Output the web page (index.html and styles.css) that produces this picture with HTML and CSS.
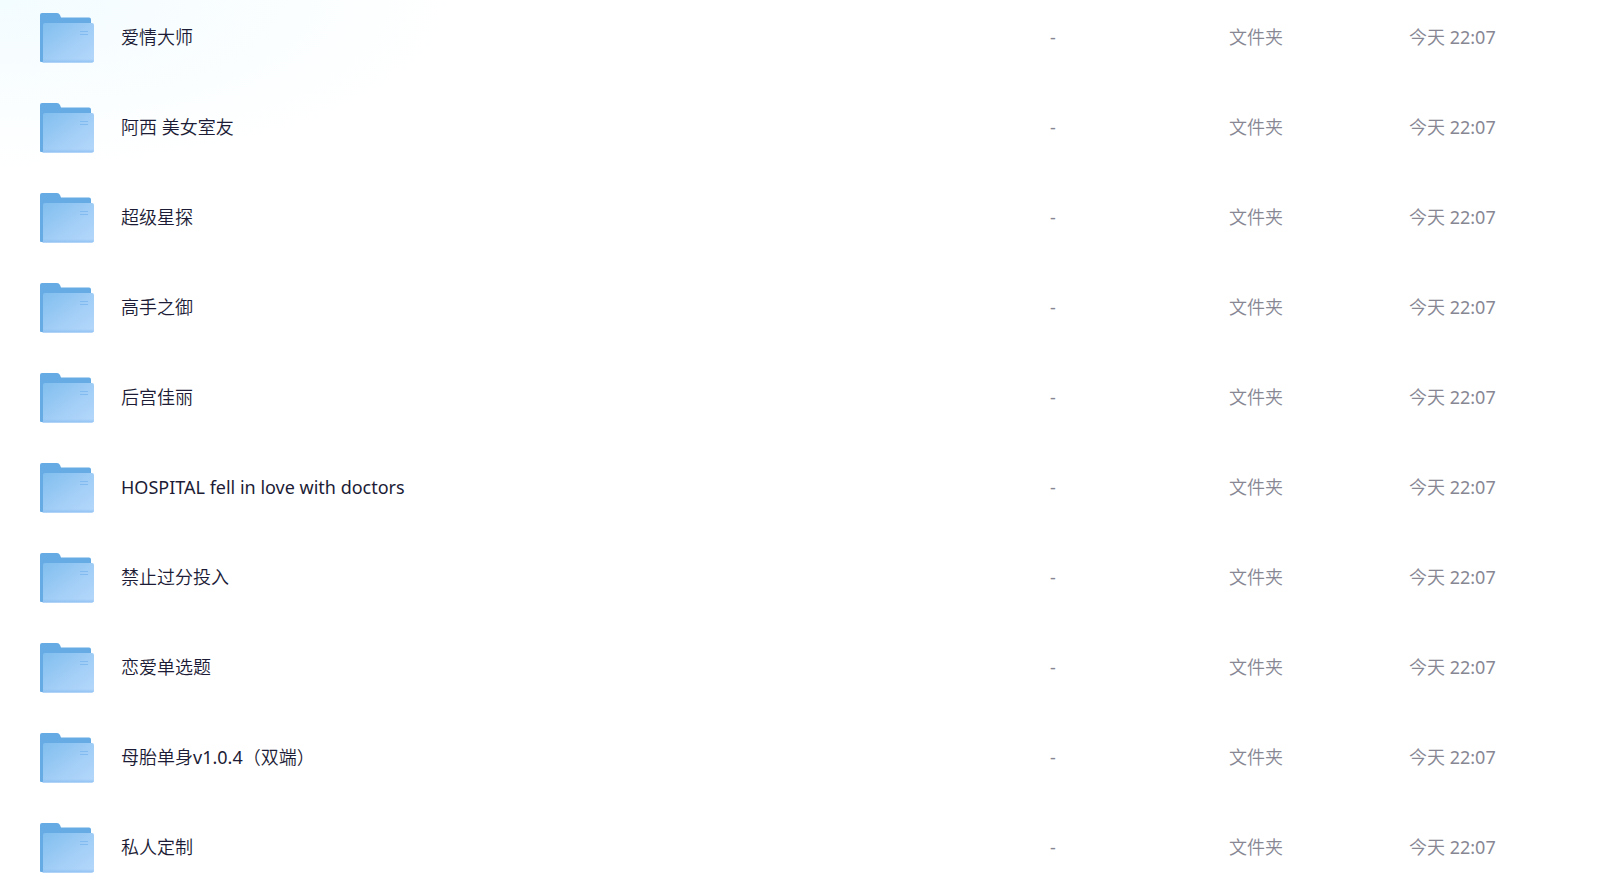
FILE: index.html
```
<!DOCTYPE html>
<html lang="zh-CN">
<head>
  <meta charset="UTF-8">
  <title>文件列表</title>
  <link rel="stylesheet" href="styles.css">
</head>
<body>
  <svg class="defs" aria-hidden="true">
    <defs>
      <linearGradient id="front" x1="0" y1="0" x2="1" y2="1">
        <stop offset="0" stop-color="#80beee"/>
        <stop offset="0.6" stop-color="#a4cff7"/>
        <stop offset="1" stop-color="#b5d8fb"/>
      </linearGradient>
      <linearGradient id="edge" x1="0" y1="0" x2="0" y2="1">
        <stop offset="0" stop-color="#8fc0f2" stop-opacity="0"/>
        <stop offset="1" stop-color="#8fc0f2"/>
      </linearGradient>
    </defs>
    <symbol id="folder" viewBox="0 -2 54 52">
      <path fill="#67abe5" d="M0 2q0-2 2-2h15q2 0 3 2l1 2.500h28q2 0 2 2V49H1q-1 0-1-1z"/>
      <path fill="url(#front)" d="M3 12q0-2 2-2h47q2 0 2 2v35.500q0 2-2 2H2q1 0 1-1.500z"/>
      <path fill="url(#edge)" d="M3 46h51v1.500q0 2-2 2H2q1 0 1-1.500z"/>
      <path stroke="#82bbf0" d="M40 18.500h8M40 21.500h8"/>
    </symbol>
  </svg>

  <table class="files">
    <tbody id="list"></tbody>
  </table>

  <script>
    const names = [
      '爱情大师',
      '阿西 美女室友',
      '超级星探',
      '高手之御',
      '后宫佳丽',
      'HOSPITAL fell in love with doctors',
      '禁止过分投入',
      '恋爱单选题',
      '母胎单身v1.0.4（双端）',
      '私人定制'
    ];

    document.querySelector('#list').innerHTML = names.map(name => `
      <tr>
        <td class="name"><div class="entry"><svg class="icon" aria-hidden="true"><use href="#folder"/></svg><span>${name}</span></div></td>
        <td class="size">-</td>
        <td class="type">文件夹</td>
        <td class="time">今天 22:07</td>
      </tr>`).join('');
  </script>
</body>
</html>
```

FILE: styles.css
```
body {
  margin: 0;
  background: radial-gradient(ellipse 460px 170px at 0 0, #f3fcff, #fff) no-repeat;
  font-family: 'Noto Sans', 'Noto Sans CJK SC DemiLight', 'Noto Sans CJK SC Light', 'Noto Sans CJK SC', sans-serif;
  font-size: 18px;
  line-height: 24px;
}

.defs {
  position: absolute;
  width: 0;
  height: 0;
}

.files {
  width: 100%;
  table-layout: fixed;
  border-collapse: collapse;
}

td {
  padding: 11px 0 27px;
  color: #878794;
}

tr:last-child td {
  padding-bottom: 20px;
}

.name {
  color: #1c1c36;
}

.entry {
  display: flex;
  align-items: center;
  gap: 27px;
  padding-left: 40px;
}

.icon {
  width: 54px;
  height: 52px;
}

.size {
  width: 179px;
}

.type {
  width: 180px;
}

.time {
  width: 191px;
}
```
